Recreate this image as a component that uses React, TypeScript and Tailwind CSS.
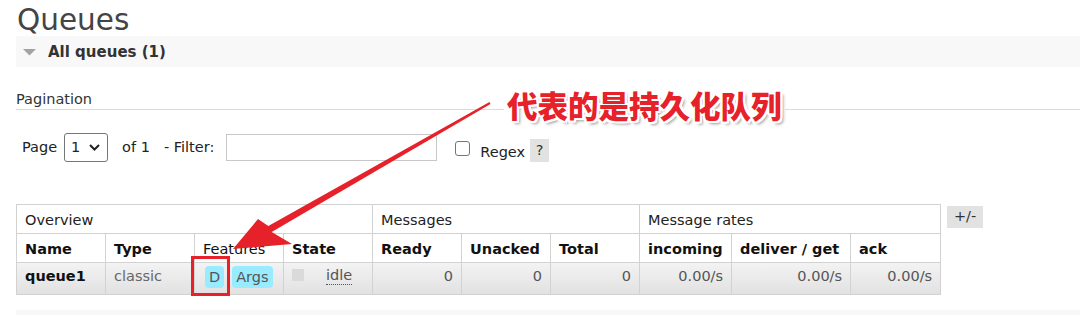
import React from "react";

const cols = [89, 89, 89, 89, 89, 89, 89, 92, 119, 90];

export default function App() {
  const td = "border border-[#d2d2d2] px-[8px] whitespace-nowrap";
  return (
    <div
      className="relative w-[1080px] h-[315px] overflow-hidden bg-white text-[14.5px] text-[#222]"
      style={{ fontFamily: '"DejaVu Sans", Verdana, sans-serif' }}
    >
      <div className="pl-[16px]">
        <h1 className="h-[36px] text-[29.5px] leading-[40px] text-[#444] pl-[1px]">Queues</h1>
        <div className="flex items-center h-[31px] bg-[#f8f8f8] pl-[7px] pt-[1px]">
          <svg width="14" height="8" viewBox="0 0 14 8" className="mr-[11px]">
            <polygon points="0,1 13,1 6.5,7.5" fill="#a3a3a3" />
          </svg>
          <span className="font-bold text-[15px] text-[#333]">All queues (1)</span>
        </div>

        <div className="mt-[20px] h-[23px] border-b border-[#dcdcdc] text-[14.5px] leading-[24px] text-[#333]">
          Pagination
        </div>

        <div className="mt-[23px] flex items-center h-[29px] pl-[6px] text-[#222]">
          <span>Page</span>
          <div className="ml-[7px] flex items-center h-[29px] w-[44px] border border-[#767676] rounded-[3px] pl-[6px]">
            <span>1</span>
            <svg width="11" height="7" viewBox="0 0 11 7" className="ml-[9px]">
              <polyline points="1,1 5.5,5.5 10,1" fill="none" stroke="#222" strokeWidth="2" />
            </svg>
          </div>
          <span className="ml-[14px]">of 1</span>
          <span className="ml-[14px]">- Filter:</span>
          <div className="ml-[12px] w-[211px] h-[27px] border border-[#c8c8c8]" />
          <div className="ml-[18px] mt-[2px] w-[15px] h-[15px] border border-[#767676] rounded-[3px]" />
          <span className="ml-[10px] mt-[10px]">Regex</span>
          <span className="ml-[5px] mt-[6px] w-[19px] h-[23px] bg-[#e2e2e2] flex items-center justify-center text-[#333]">
            ?
          </span>
        </div>

        <div className="mt-[42px] flex items-start">
          <table className="border-collapse table-fixed w-[924px]">
            <colgroup>
              {cols.map((w, i) => (
                <col key={i} style={{ width: w }} />
              ))}
            </colgroup>
            <tbody>
              <tr className="h-[29px]">
                <td colSpan={4} className={td + " pt-[3px]"}>Overview</td>
                <td colSpan={3} className={td + " pt-[3px]"}>Messages</td>
                <td colSpan={3} className={td + " pt-[3px]"}>Message rates</td>
              </tr>
              <tr className="h-[29px] font-bold text-[#111]">
                <td className={td + " pt-[3px]"}>Name</td>
                <td className={td + " pt-[3px]"}>Type</td>
                <td className={td + " pt-[3px] font-normal"}>Features</td>
                <td className={td + " pt-[3px]"}>State</td>
                <td className={td + " pt-[3px]"}>Ready</td>
                <td className={td + " pt-[3px]"}>Unacked</td>
                <td className={td + " pt-[3px]"}>Total</td>
                <td className={td + " pt-[3px]"}>incoming</td>
                <td className={td + " pt-[3px]"}>deliver / get</td>
                <td className={td + " pt-[3px]"}>ack</td>
              </tr>
              <tr className="h-[32px] bg-gradient-to-b from-[#f3f3f3] to-[#e1e1e1] align-top">
                <td className={td + " font-bold text-[#111] pt-[3px]"}>queue1</td>
                <td className={td + " text-[#666] pt-[3px]"}>classic</td>
                <td className={td + " pt-[3px] pl-[10px]"}>
                  <div className="flex gap-[8px]">
                    <span className="bg-[#99ebff] rounded-[4px] px-[4px] h-[22px] leading-[23px] text-[#555]">D</span>
                    <span className="bg-[#99ebff] rounded-[4px] px-[4px] h-[22px] leading-[23px] text-[#555]">Args</span>
                  </div>
                </td>
                <td className={td + " pt-[5px]"}>
                  <div className="flex items-start">
                    <span className="w-[12px] h-[12px] bg-[#dadada] mt-[1px]" />
                    <span className="ml-[22px] -mt-[1px] text-[#555] border-b border-dotted border-[#555] leading-[17px]">idle</span>
                  </div>
                </td>
                <td className={td + " text-right text-[#555] pt-[3px]"}>0</td>
                <td className={td + " text-right text-[#555] pt-[3px]"}>0</td>
                <td className={td + " text-right text-[#555] pt-[3px]"}>0</td>
                <td className={td + " text-right text-[#555] pt-[3px]"}>0.00/s</td>
                <td className={td + " text-right text-[#555] pt-[3px]"}>0.00/s</td>
                <td className={td + " text-right text-[#555] pt-[3px]"}>0.00/s</td>
              </tr>
            </tbody>
          </table>
          <div className="ml-[6px] mt-[2px] w-[36px] h-[22px] bg-[#e2e2e2] flex items-center justify-center text-[#333]">
            +/-
          </div>
        </div>

        <div className="mt-[15px] h-[10px] bg-[#f8f8f8]" />
      </div>

      {/* annotation overlay */}
      <svg className="absolute left-0 top-0 pointer-events-none" width="1080" height="315">
        <polygon
          points="489.5,102.1 490.5,103.9 271.7,232 292,244 233,249 258,219 268.3,226"
          fill="#e6212a"
        />
        <rect x="192.5" y="257.5" width="36" height="37" fill="none" stroke="#e6212a" strokeWidth="3" />
      </svg>
      <div
        className="absolute left-[504px] top-[84px] bg-white px-[3px] text-[30.5px] leading-[42px] font-black text-[#e6212a] [text-shadow:-2px_-2px_0_#fff,2px_-2px_0_#fff,-2px_2px_0_#fff,2px_2px_0_#fff,0_2px_0_#fff,0_-2px_0_#fff,2px_0_0_#fff,-2px_0_0_#fff,3px_3px_3px_#999]"
        style={{ fontFamily: '"Noto Sans CJK SC", sans-serif' }}
      >
        代表的是持久化队列
      </div>
    </div>
  );
}
